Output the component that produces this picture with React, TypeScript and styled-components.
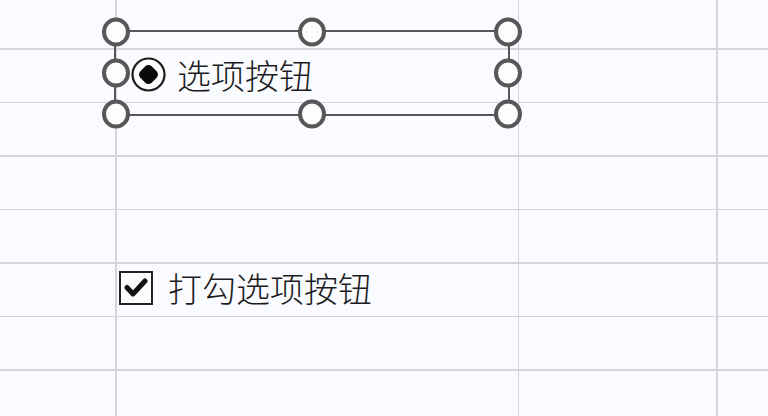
import type { FC } from 'react';
import styled, { createGlobalStyle } from 'styled-components';

const GlobalStyle = createGlobalStyle`
  html, body {
    margin: 0;
    padding: 0;
    background: #fafbfe;
  }
  body {
    font-family: "Noto Sans CJK SC", "Noto Sans", sans-serif;
  }
`;

const LINE = '#d3d4dc';
const HANDLE = '#5a5559';

const Sheet = styled.div`
  position: relative;
  width: 768px;
  height: 416px;
  overflow: hidden;
  background: #fafbfe;
`;

const Grid = styled.div`
  display: grid;
  grid-template-columns: 115px 401px 197px 1fr;
  grid-template-rows: 48px repeat(7, 52px);
  column-gap: 1.5px;
  row-gap: 1.5px;
  background: ${LINE};
  width: 100%;
  height: 100%;
`;

const Cell = styled.div`
  background: #fafbfe;
`;

const SelectionFrame = styled.div`
  position: absolute;
  left: 114px;
  top: 30px;
  width: 396px;
  height: 86px;
  box-sizing: border-box;
  border: 2px solid ${HANDLE};
`;

const Handle = styled.span<{ $x: number; $y: number }>`
  position: absolute;
  left: ${(p) => p.$x}%;
  top: ${(p) => p.$y}%;
  width: 28px;
  height: 29px;
  box-sizing: border-box;
  border: 4.5px solid ${HANDLE};
  border-radius: 50%;
  background: #fdfdfe;
  transform: translate(-50%, -50%);
  z-index: 2;
`;

const RadioOption = styled.label`
  position: absolute;
  left: 15px;
  top: 25px;
  display: flex;
  align-items: center;
  gap: 11px;
`;

const CheckOption = styled.label`
  position: absolute;
  left: 119px;
  top: 271px;
  display: flex;
  align-items: center;
  gap: 15px;
`;

const Label = styled.span`
  font-family: "Noto Sans CJK SC", "Noto Sans", sans-serif;
  font-size: 34px;
  font-weight: 300;
  line-height: 34px;
  color: #1c1c1e;
  white-space: nowrap;
`;

const CheckBox = styled.span`
  display: flex;
  align-items: center;
  justify-content: center;
  width: 34px;
  height: 34px;
  box-sizing: border-box;
  border: 2.5px solid #232325;
  background: #fdfdfe;
`;

const RadioIcon: FC = () => (
  <svg width="35" height="35" viewBox="0 0 35 35">
    <circle cx="17.5" cy="17.5" r="16" fill="#fdfdfe" stroke="#1a1a1a" strokeWidth="2.2" />
    <rect
      x="9.5"
      y="9.5"
      width="16"
      height="16"
      rx="4.5"
      fill="#0a0a0a"
      transform="rotate(45 17.5 17.5)"
    />
  </svg>
);

const CheckIcon: FC = () => (
  <svg width="24" height="20" viewBox="0 0 24 20">
    <path
      d="M3 9.5 L9 16 L21 3"
      fill="none"
      stroke="#111"
      strokeWidth="5"
      strokeLinecap="round"
      strokeLinejoin="round"
    />
  </svg>
);

const handles = [
  [0, 0], [50, 0], [100, 0],
  [0, 50], [100, 50],
  [0, 100], [50, 100], [100, 100],
];

const App: FC = () => (
  <>
    <GlobalStyle />
    <Sheet>
      <Grid>
        {Array.from({ length: 32 }).map((_, i) => (
          <Cell key={i} />
        ))}
      </Grid>

      <SelectionFrame>
        {handles.map(([x, y]) => (
          <Handle key={`${x}-${y}`} $x={x} $y={y} />
        ))}
        <RadioOption>
          <RadioIcon />
          <Label>选项按钮</Label>
        </RadioOption>
      </SelectionFrame>

      <CheckOption>
        <CheckBox>
          <CheckIcon />
        </CheckBox>
        <Label>打勾选项按钮</Label>
      </CheckOption>
    </Sheet>
  </>
);

export default App;
